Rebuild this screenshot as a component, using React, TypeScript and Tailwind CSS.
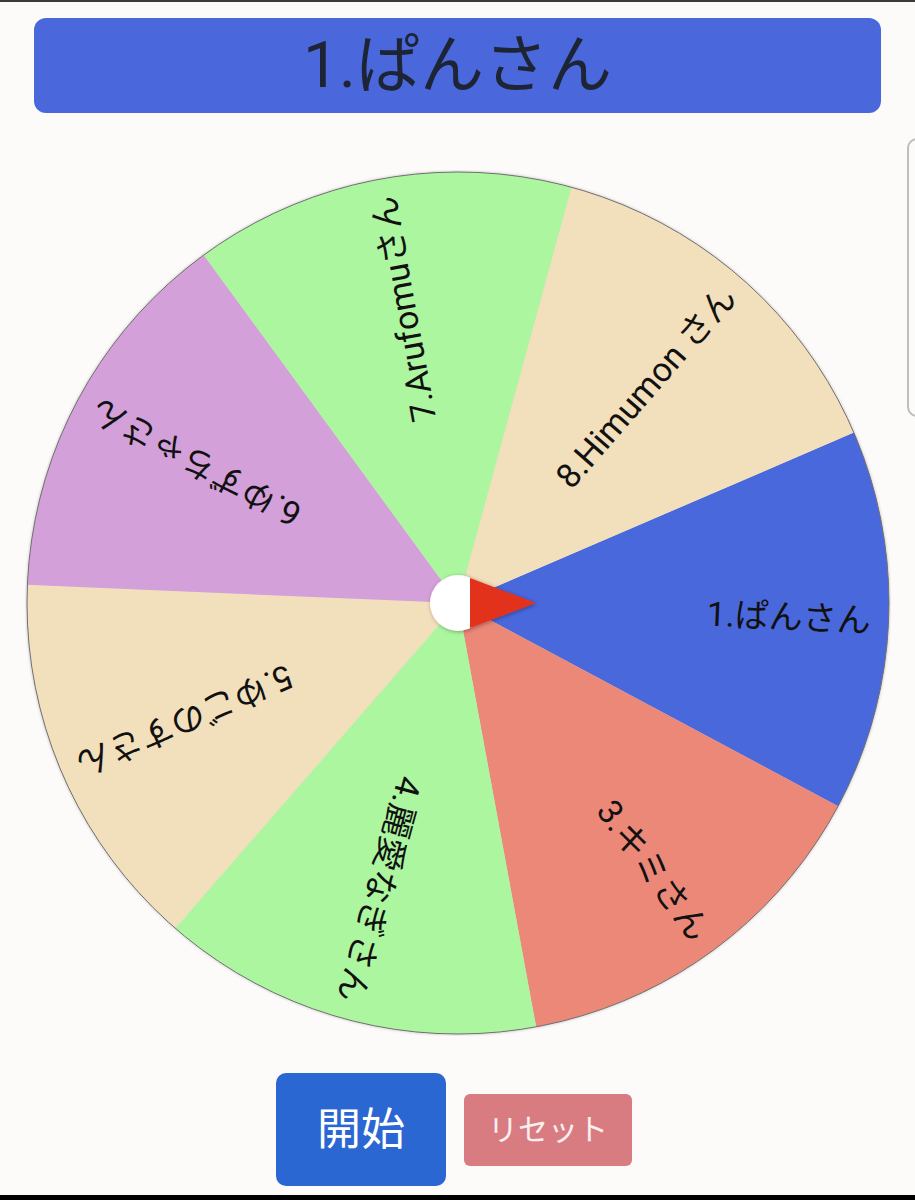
import React from 'react'

type Slot = { label: string; color: string }

const slots: Slot[] = [
  { label: '1.ぱんさん', color: '#4a68dc' },
  { label: '3.キミさん', color: '#ec8878' },
  { label: '4.麗愛なぎさん', color: '#adf6a0' },
  { label: '5.ゆごのすさん', color: '#f2dfbb' },
  { label: '6.ゆずちゃさん', color: '#d3a0da' },
  { label: '7.Arufomuさん', color: '#adf6a0' },
  { label: '8.Himumon さん', color: '#f2dfbb' },
]

const SIZE = 866
const C = SIZE / 2
const R = 431
// wheel has stopped with the first slot under the pointer
const OFFSET = -23.3

function point(deg: number, r: number) {
  const a = (deg * Math.PI) / 180
  return [C + r * Math.cos(a), C + r * Math.sin(a)]
}

function Wheel() {
  const step = 360 / slots.length
  return (
    <svg width={SIZE} height={SIZE} viewBox={`0 0 ${SIZE} ${SIZE}`} className="block">
      <defs>
        <filter id="rim" x="-5%" y="-5%" width="110%" height="110%">
          <feDropShadow dx="0" dy="0" stdDeviation="1.5" floodColor="#000" floodOpacity="0.25" />
        </filter>
        <filter id="pin" x="-50%" y="-50%" width="200%" height="200%">
          <feDropShadow dx="1" dy="1" stdDeviation="2" floodColor="#000" floodOpacity="0.35" />
        </filter>
      </defs>
      <g filter="url(#rim)">
        {slots.map((s, i) => {
          const a0 = OFFSET + i * step
          const a1 = a0 + step
          const [x0, y0] = point(a0, R)
          const [x1, y1] = point(a1, R)
          return (
            <path
              key={s.label}
              d={`M ${C} ${C} L ${x0} ${y0} A ${R} ${R} 0 0 1 ${x1} ${y1} Z`}
              fill={s.color}
            />
          )
        })}
        <circle cx={C} cy={C} r={R} fill="none" stroke="#6f6f6f" strokeWidth="1" />
      </g>
      {slots.map((s, i) => {
        const mid = OFFSET + i * step + step / 2
        return (
          <text
            key={s.label}
            x={C + 413}
            y={C}
            textAnchor="end"
            dominantBaseline="central"
            fontSize="34"
            fill="#111"
            fontFamily="Roboto, 'Noto Sans CJK JP', sans-serif"
            transform={`rotate(${mid} ${C} ${C})`}
          >
            {s.label}
          </text>
        )
      })}
      <g filter="url(#pin)">
        <circle cx={C} cy={C} r={28} fill="#fff" />
        <polygon points={`${C + 12},${C - 25} ${C + 12},${C + 25} ${C + 78},${C}`} fill="#e3301f" />
      </g>
    </svg>
  )
}

export default function App() {
  return (
    <div className="relative flex h-[1200px] flex-col items-center overflow-hidden border-t-2 border-b-[5px] border-t-[#3a3a3a] border-b-black bg-[#fdfafa] font-['Roboto','Noto_Sans_CJK_JP',sans-serif]">
      <div className="mt-4 flex h-[95px] w-[847px] items-center justify-center rounded-xl bg-[#4a68dc]">
        <span className="text-[64px] leading-none text-[#1d2535]">1.ぱんさん</span>
      </div>

      <div className="mt-[57px]">
        <Wheel />
      </div>

      <div className="mt-[37px] flex items-center gap-[18px] pr-[7px]">
        <button className="flex h-[113px] w-[170px] items-center justify-center rounded-[10px] bg-[#2b67d2] text-[44px] leading-none text-white">
          開始
        </button>
        <button className="flex h-[72px] w-[168px] items-center justify-center rounded-md bg-[#d97c82] text-[30px] leading-none text-[#fbeff0]">
          リセット
        </button>
      </div>

      {/* edge panel handle */}
      <div className="absolute left-[907px] top-[136px] h-[279px] w-[20px] rounded-l-[10px] border-2 border-r-0 border-[#bdbdbd]" />
    </div>
  )
}
